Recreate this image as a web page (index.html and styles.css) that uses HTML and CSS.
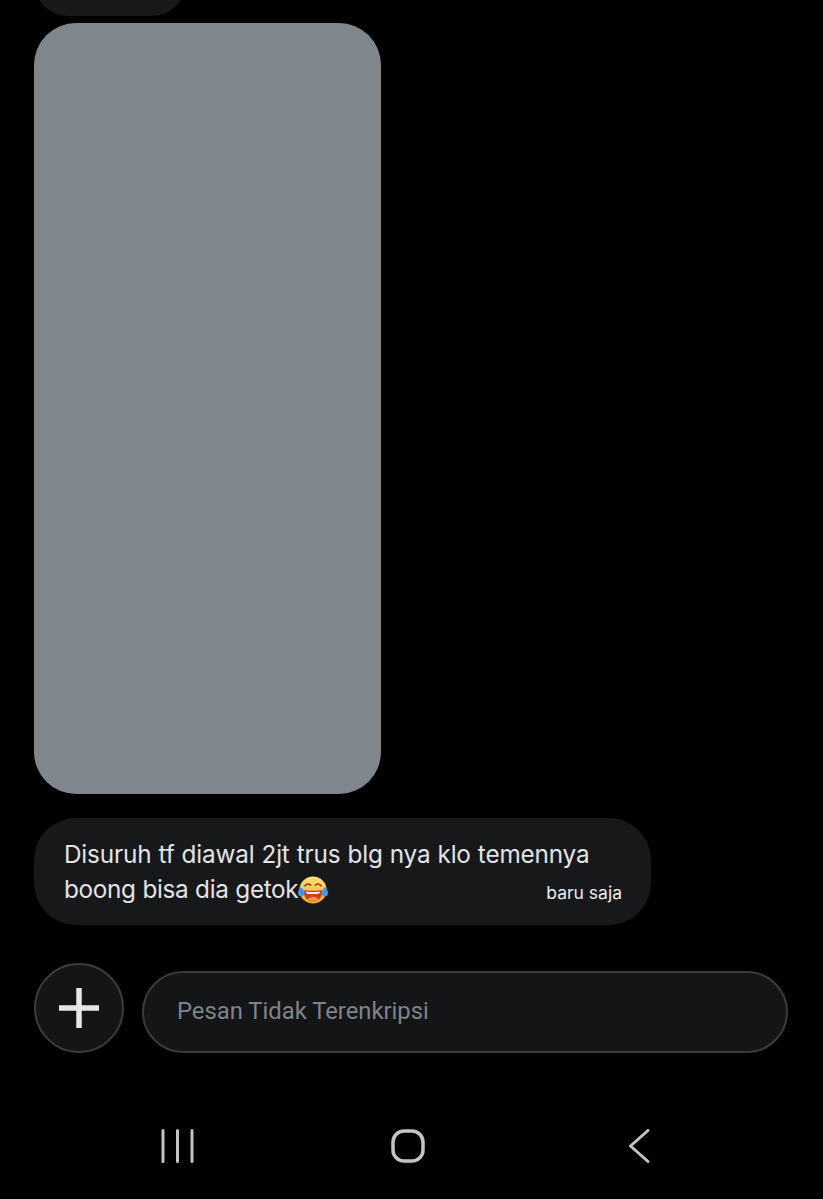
FILE: index.html
```html
<!DOCTYPE html>
<html lang="id">
<head>
<meta charset="utf-8">
<title>Pesan</title>
<link rel="stylesheet" href="styles.css">
</head>
<body>
<main class="thread">
  <div class="bubble-prev"></div>
  <div class="media"></div>
  <div class="bubble">
    <p class="msg">Disuruh tf diawal 2jt trus blg nya klo temennya<br><span class="tight">boong bisa dia getok</span><svg class="emoji" viewBox="0 0 32 32" aria-hidden="true">
      <defs><linearGradient id="face" x1="0" y1="0" x2="0" y2="1"><stop offset="0" stop-color="#ffe27a"/><stop offset="1" stop-color="#f9a62f"/></linearGradient></defs>
      <circle cx="16" cy="16" r="14.500" fill="url(#face)"/>
      <path d="M6 17.500c0-1 1-1.500 2-1.300 5 .9 11 .9 16 0 1-.2 2 .3 2 1.300 0 6-4.500 11-10 11S6 23.500 6 17.500z" fill="#c9401c"/>
      <path d="M8.500 17.800c5 .7 10 .7 15 0-.2 1.300-1 2-2 2.100-3.700.4-7.300.4-11 0-1-.1-1.800-.8-2-2.100z" fill="#fff"/>
      <path d="M10 26c1.500-1.800 3.500-2.700 6-2.700s4.500.9 6 2.700c-1.700 1.600-3.700 2.500-6 2.500s-4.300-.9-6-2.500z" fill="#f7913a"/>
      <path d="M7.500 11.500c1.500-2.200 4-2.500 6-.8M24.500 11.500c-1.500-2.200-4-2.500-6-.8" fill="none" stroke="#7a4a1a" stroke-width="1.800" stroke-linecap="round"/>
      <path d="M0 19c0-2.500 1.800-5 2.800-6 1.500 1 4.200 3 4.200 5.500S5.500 23 3.500 23 0 21.500 0 19zM32 19c0-2.500-1.800-5-2.800-6-1.500 1-4.200 3-4.200 5.500s1.500 4.500 3.500 4.500S32 21.500 32 19z" fill="#3f9be8"/>
    </svg></p>
    <span class="time">baru saja</span>
  </div>
  <div class="composer">
    <button class="add" type="button" aria-label="Tambah">
      <svg class="plus" viewBox="0 0 40 40" aria-hidden="true"><path d="M20 0v40M0 20h40" stroke="#e4e6e7" stroke-width="5.500" fill="none"/></svg>
    </button>
    <div class="input">Pesan Tidak Terenkripsi</div>
  </div>
</main>
<nav class="navbar">
  <svg class="nav-icon" viewBox="0 0 34 34" aria-hidden="true"><path d="M2 1.500v31M16.500 1.500v31M31 1.500v31" stroke="#c4c4c4" stroke-width="3" stroke-linecap="round" fill="none"/></svg>
  <svg class="nav-icon" viewBox="0 0 34 34" aria-hidden="true"><rect x="2" y="2" width="30" height="30" rx="11" stroke="#c4c4c4" stroke-width="3.500" fill="none"/></svg>
  <svg class="nav-icon" viewBox="0 0 34 34" aria-hidden="true"><path d="M27 1.500 9.500 17 27 32.500" stroke="#c4c4c4" stroke-width="3" stroke-linecap="round" stroke-linejoin="round" fill="none"/></svg>
</nav>
</body>
</html>
```
FILE: styles.css
```css
* { box-sizing: border-box; }
html, body { margin: 0; height: 1199px; overflow: hidden; background: #000; }
body { display: flex; flex-direction: column; font-family: Inter, "Liberation Sans", sans-serif; }
.thread { display: flex; flex-direction: column; align-items: flex-start; padding: 0 35px 0 34px; }
.bubble-prev { width: 152px; height: 76px; margin-top: -60px; border-radius: 34px; background: #17181a; }
.media { width: 347px; height: 771px; margin-top: 7px; border-radius: 42px; background: #7f868c; }
.bubble { position: relative; width: 617px; height: 107px; margin-top: 24px; padding: 19px 30px 0 30px; border-radius: 42px; background: #17181a; }
.msg { margin: 0; font-size: 24.300px; line-height: 35px; letter-spacing: -0.16px; word-spacing: 0.4px; color: #e2e4e5; white-space: nowrap; }
.tight { letter-spacing: -0.35px; }
.emoji { width: 30px; height: 30px; margin-left: 0; vertical-align: -7px; }
.time { position: absolute; right: 29px; bottom: 21px; font-size: 17.500px; line-height: 22px; color: #eceeef; }
.composer { display: flex; align-items: flex-end; gap: 18px; width: 100%; margin-top: 38px; }
.add { display: flex; align-items: center; justify-content: center; flex: none; width: 90px; height: 90px; padding: 0; border: 2px solid #3a3b3d; border-radius: 50%; background: #141517; }
.plus { width: 40px; height: 40px; }
.input { flex: 1; display: flex; align-items: center; height: 82px; padding: 0 33px 2px; border: 2px solid #3a3b3d; border-radius: 41px; background: #141517; font-family: Roboto, sans-serif; font-size: 23.800px; color: #7e8489; }
.navbar { display: flex; justify-content: space-between; align-items: center; margin-top: 76px; padding: 0 168px 0 161px; }
.nav-icon { width: 34px; height: 34px; }
```
